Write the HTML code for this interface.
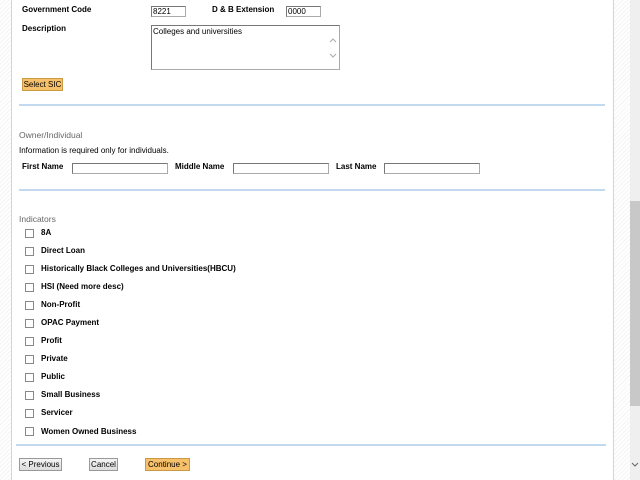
<!DOCTYPE html>
<html><head><meta charset="utf-8"><style>
*{margin:0;padding:0;box-sizing:border-box}
body{width:640px;height:480px;overflow:hidden;position:relative;background:#fff;font-family:"Liberation Sans",Verdana,sans-serif;font-size:8px;color:#000}
.hatch{position:absolute;top:0;height:480px;background:repeating-linear-gradient(135deg,#f4f4f4 0 1px,#fff 1px 3px)}
.a{position:absolute;white-space:nowrap}
b.a{font-weight:bold}
.in{position:absolute;height:11px;border:1px solid #aaa;border-top-color:#777;border-left-color:#777;background:#fff;font-size:8px;padding-left:1px;line-height:9px}
.hr{position:absolute;left:19px;width:586px;height:2px;background:#c2d9f0}
.cb{position:absolute;left:25px;width:9px;height:9px;border:1px solid #888;background:#fff}
.btn{position:absolute;height:13px;border:1px solid #999;background:linear-gradient(#f4f4f4,#ddd);font-size:8px;line-height:11px;text-align:center}
.or{background:#f7c06a;border-color:#c99a44}
.g{color:#666}
</style></head><body>
<div class="hatch" style="left:0;width:11px"></div>
<div class="hatch" style="left:614px;width:16px"></div>
<div class="a" style="left:11px;top:0;width:1px;height:480px;background:#c5d7ea"></div>
<div class="a" style="left:613px;top:0;width:1px;height:480px;background:#c5d7ea"></div>
<div class="a" style="left:630px;top:0;width:10px;height:480px;background:#efefef"></div>
<div class="a" style="left:630px;top:201px;width:10px;height:205px;background:#c8c8c8"></div>
<svg class="a" style="left:631px;top:462px" width="8" height="6"><path d="M1 1L4 4L7 1" fill="none" stroke="#666"/></svg>

<b class="a" style="left:22px;top:5px">Government Code</b>
<div class="in" style="left:151px;top:6px;width:35px">8221</div>
<b class="a" style="left:212px;top:5px">D &amp; B Extension</b>
<div class="in" style="left:286px;top:6px;width:35px">0000</div>
<b class="a" style="left:22px;top:24px">Description</b>
<div class="in" style="left:151px;top:25px;width:189px;height:45px;line-height:11px">Colleges and universities</div>
<svg class="a" style="left:329px;top:37px" width="8" height="24"><path d="M1 5L4 2L7 5M1 17L4 20L7 17" fill="none" stroke="#aaa"/></svg>
<div class="btn or" style="left:22px;top:78px;width:41px">Select SIC</div>
<div class="hr" style="top:104px"></div>

<div class="a g" style="left:19px;top:130px;font-size:8.5px">Owner/Individual</div>
<div class="a" style="left:19px;top:146px">Information is required only for individuals.</div>
<b class="a" style="left:22px;top:162px">First Name</b>
<div class="in" style="left:72px;top:163px;width:96px">&nbsp;</div>
<b class="a" style="left:175px;top:162px">Middle Name</b>
<div class="in" style="left:233px;top:163px;width:96px">&nbsp;</div>
<b class="a" style="left:336px;top:162px">Last Name</b>
<div class="in" style="left:384px;top:163px;width:96px">&nbsp;</div>
<div class="hr" style="top:189px"></div>

<div class="a g" style="left:19px;top:214px;font-size:8.5px">Indicators</div>

<div class="cb" style="top:229px"></div><b class="a" style="left:41px;top:228px">8A</b>
<div class="cb" style="top:247px"></div><b class="a" style="left:41px;top:246px">Direct Loan</b>
<div class="cb" style="top:265px"></div><b class="a" style="left:41px;top:264px">Historically Black Colleges and Universities(HBCU)</b>
<div class="cb" style="top:283px"></div><b class="a" style="left:41px;top:282px">HSI (Need more desc)</b>
<div class="cb" style="top:301px"></div><b class="a" style="left:41px;top:300px">Non-Profit</b>
<div class="cb" style="top:319px"></div><b class="a" style="left:41px;top:318px">OPAC Payment</b>
<div class="cb" style="top:337px"></div><b class="a" style="left:41px;top:336px">Profit</b>
<div class="cb" style="top:355px"></div><b class="a" style="left:41px;top:354px">Private</b>
<div class="cb" style="top:373px"></div><b class="a" style="left:41px;top:372px">Public</b>
<div class="cb" style="top:391px"></div><b class="a" style="left:41px;top:390px">Small Business</b>
<div class="cb" style="top:409px"></div><b class="a" style="left:41px;top:408px">Servicer</b>
<div class="cb" style="top:427px"></div><b class="a" style="left:41px;top:427px">Women Owned Business</b>
<div class="hr" style="top:444px;left:16px;width:590px"></div>

<div class="btn" style="left:19px;top:458px;width:43px">&lt; Previous</div>
<div class="btn" style="left:89px;top:458px;width:29px">Cancel</div>
<div class="btn or" style="left:145px;top:458px;width:45px">Continue &gt;</div>
</body></html>
